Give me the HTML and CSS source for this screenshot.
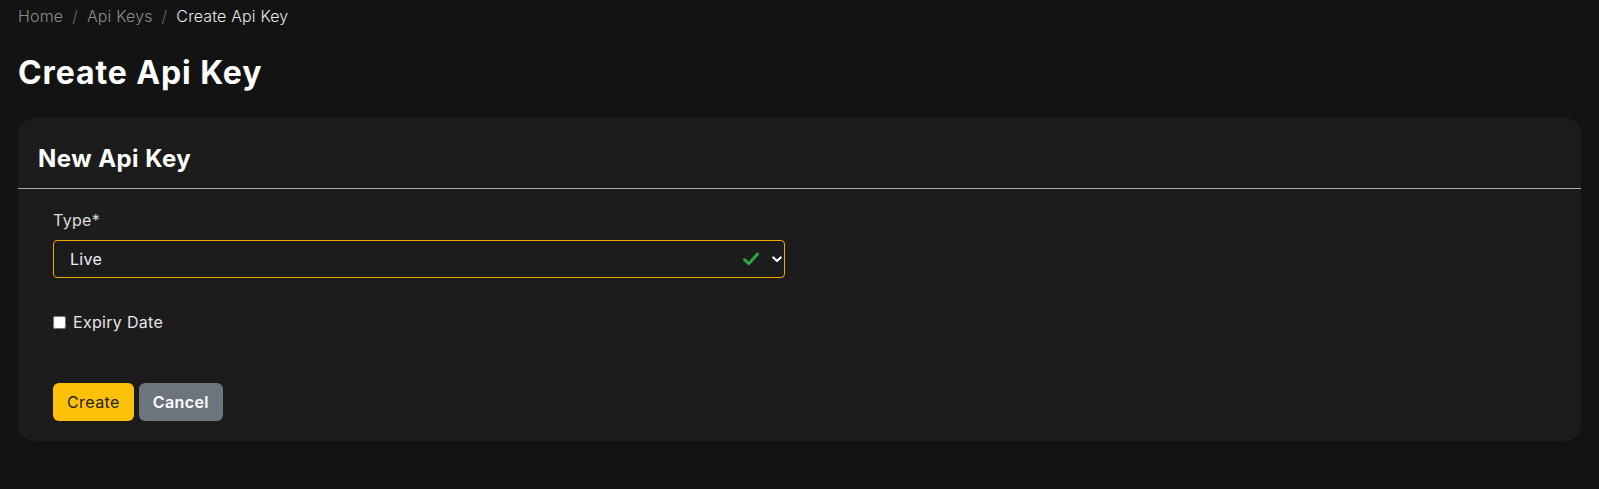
FILE: index.html
```html
<!DOCTYPE html>
<html lang="en">
<head>
<meta charset="utf-8">
<title>Create Api Key</title>
<link rel="stylesheet" href="styles.css">
</head>
<body>
<main class="page">
  <nav class="breadcrumb">
    <a class="crumb" href="#">Home</a>
    <span class="sep">/</span>
    <a class="crumb" href="#">Api Keys</a>
    <span class="sep">/</span>
    <span class="crumb active">Create Api Key</span>
  </nav>
  <h1 class="page-title">Create Api Key</h1>
  <section class="card">
    <header class="card-header">
      <h2 class="card-title">New Api Key</h2>
    </header>
    <form class="card-body">
      <div class="col-half">
        <label class="field-label" for="type">Type*</label>
        <div class="select-wrap">
          <select id="type" class="select">
            <option>Live</option>
            <option>Test</option>
          </select>
          <svg class="valid-icon" width="16" height="14" viewBox="0 0 16 14" aria-hidden="true">
            <path d="M1.5 7.5 L5.8 11.8 L14.5 2" fill="none" stroke="#28a745" stroke-width="3" stroke-linecap="round" stroke-linejoin="round"/>
          </svg>
          <svg class="chevron" width="10" height="7" viewBox="0 0 10 7" aria-hidden="true">
            <path d="M1.3 1.5 L5 5 L8.7 1.5" fill="none" stroke="#ffffff" stroke-width="2.2" stroke-linecap="round" stroke-linejoin="round"/>
          </svg>
        </div>
        <label class="check">
          <input type="checkbox" class="check-input">
          <span>Expiry Date</span>
        </label>
        <div class="actions">
          <button type="button" class="btn btn-primary">Create</button>
          <button type="button" class="btn btn-secondary">Cancel</button>
        </div>
      </div>
    </form>
  </section>
</main>
</body>
</html>
```
FILE: styles.css
```css
* { box-sizing: border-box; }

html, body {
  margin: 0;
  padding: 0;
  background: #131313;
  color: #e6e6e6;
  font-family: Inter, "Open Sans", "Liberation Sans", sans-serif;
  font-size: 16px;
  letter-spacing: 0.3px;
}

.page {
  padding: 4px 18px 0 18px;
}

.breadcrumb {
  display: flex;
  align-items: center;
  line-height: 24px;
  font-weight: 300;
  font-size: 16px;
  letter-spacing: 0.15px;
}

.crumb {
  color: #8c8c8c;
  text-decoration: none;
}

.crumb.active {
  color: #e8e8e8;
}

.sep {
  color: #6c6c6c;
  padding: 0 9px;
}

.page-title {
  margin: 26px 0 26px 0;
  font-size: 32px;
  line-height: 38px;
  font-weight: 700;
  color: #ffffff;
  letter-spacing: 0.9px;
}

.card {
  background: #1c1c1c;
  border-radius: 16px;
  overflow: hidden;
}

.card-header {
  padding: 26px 20px 15px 20px;
  border-bottom: 1px solid #a9a9a9;
}

.card-title {
  margin: 0;
  font-size: 24px;
  line-height: 29px;
  font-weight: 700;
  color: #ffffff;
  letter-spacing: 0.45px;
}

.card-body {
  padding: 19px 20px 20px 20px;
}

.col-half {
  width: 50%;
  padding: 0 15px;
}

.field-label {
  display: block;
  line-height: 24px;
  color: #dcdcdc;
  margin-bottom: 8px;
}

.select-wrap {
  position: relative;
}

.select {
  display: block;
  width: 100%;
  height: 38px;
  padding: 0 16px;
  background: #1c1c1c;
  color: #f0f0f0;
  border: 1px solid #f0a800;
  border-radius: 4px;
  font-family: inherit;
  font-size: 16px;
  letter-spacing: 0.3px;
  appearance: none;
  -webkit-appearance: none;
  outline: none;
}

.valid-icon {
  position: absolute;
  right: 26px;
  top: 12px;
  pointer-events: none;
}

.chevron {
  position: absolute;
  right: 3px;
  top: 16px;
  pointer-events: none;
}

.check {
  display: flex;
  align-items: center;
  gap: 7px;
  margin-top: 32px;
  line-height: 24px;
  color: #e6e6e6;
}

.check-input {
  width: 13px;
  height: 13px;
  margin: 0;
}

.actions {
  display: flex;
  gap: 5px;
  margin-top: 49px;
}

.btn {
  height: 38px;
  padding: 0 14px;
  border: none;
  border-radius: 6px;
  font-family: inherit;
  font-size: 16px;
  letter-spacing: 0.4px;
  cursor: pointer;
}

.btn-primary {
  background: #ffc107;
  color: #212529;
  font-weight: 400;
}

.btn-secondary {
  background: #6c757d;
  color: #ffffff;
  font-weight: 600;
  padding: 0 14px;
}
```
